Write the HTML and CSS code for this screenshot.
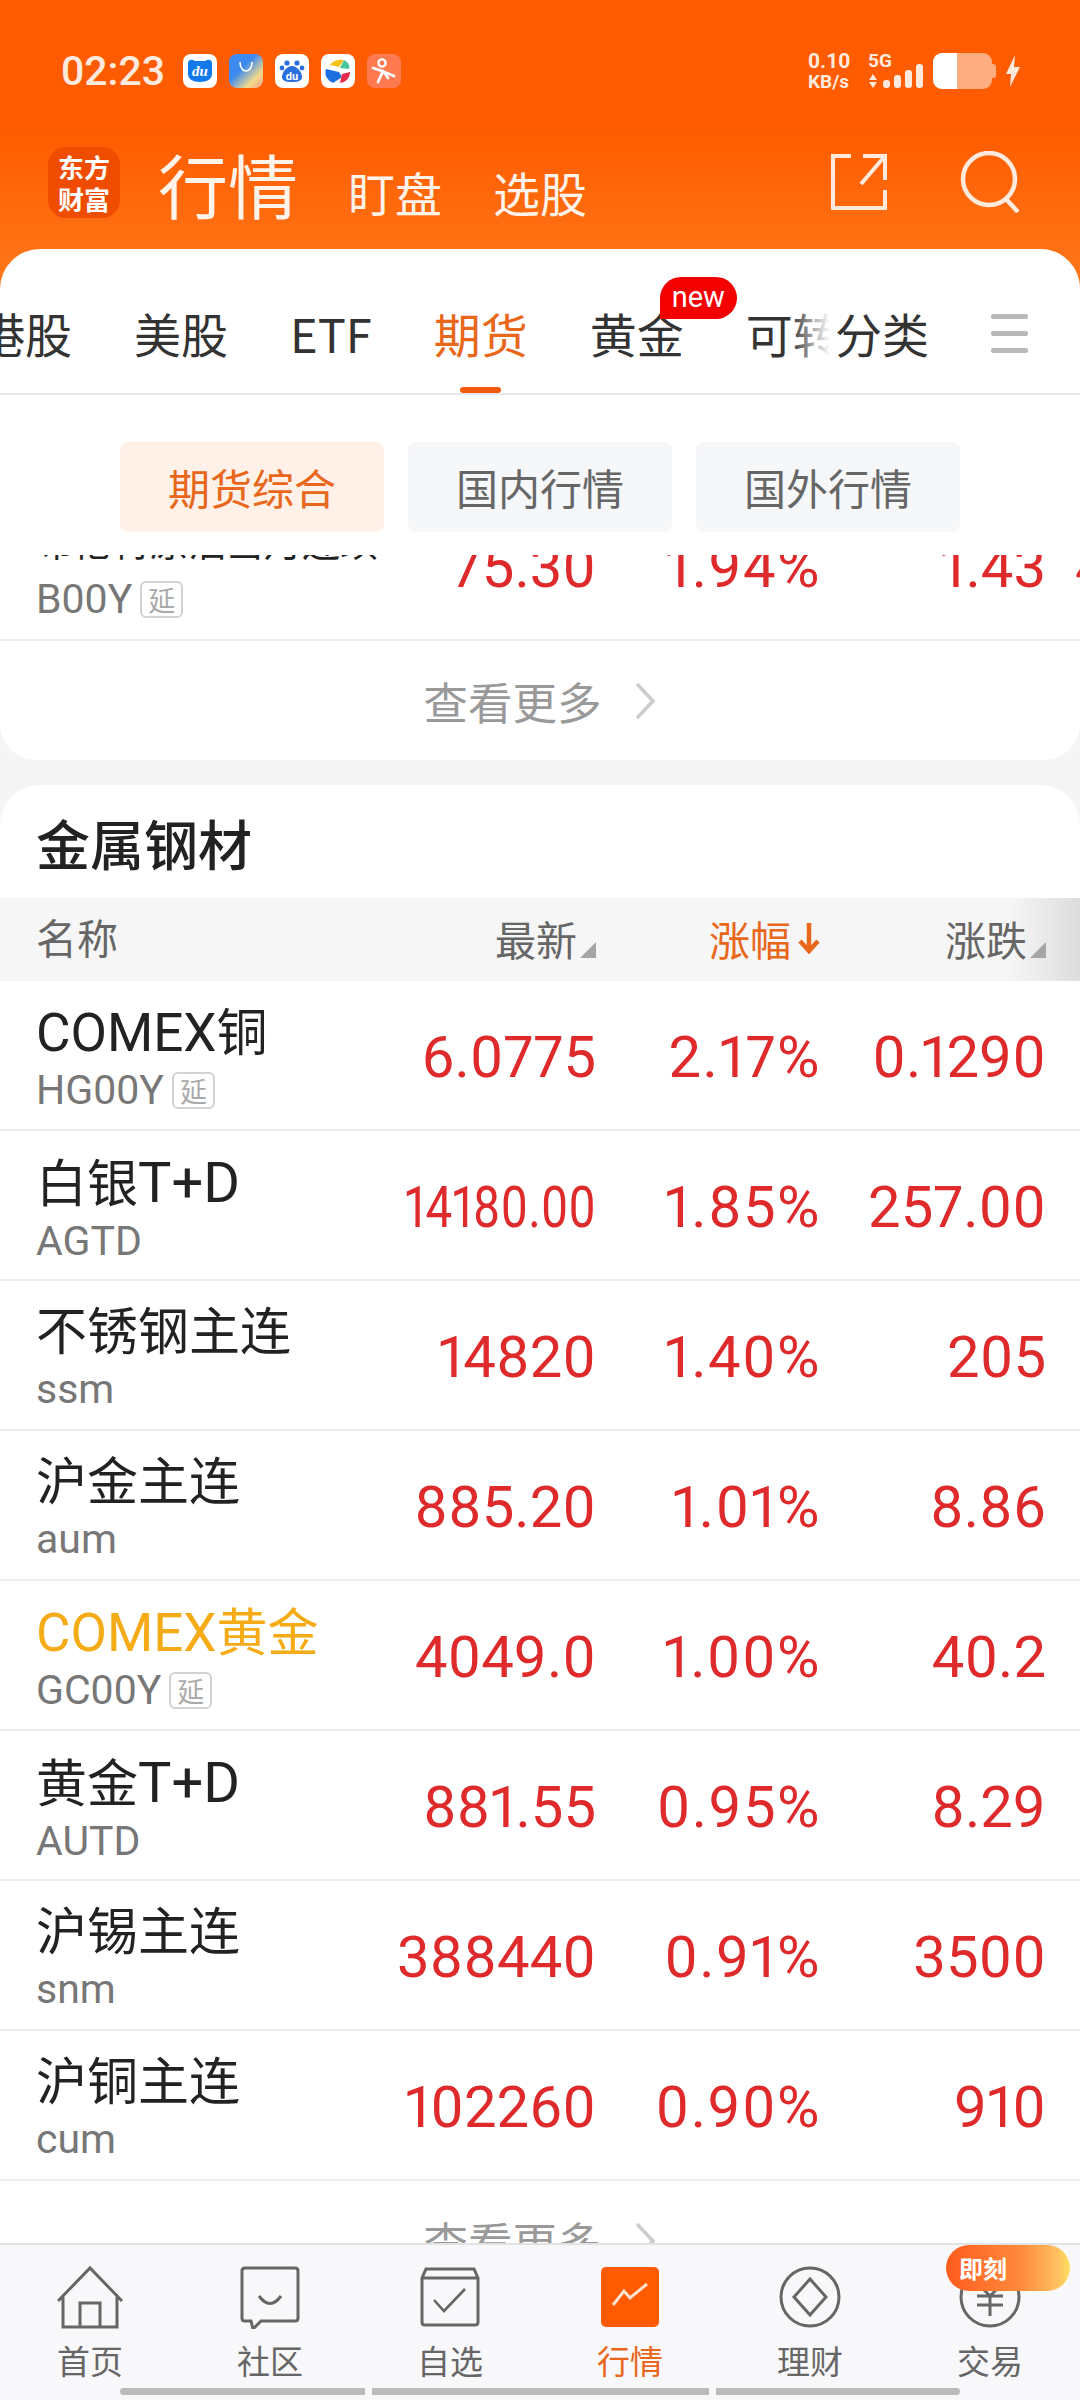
FILE: index.html
```html
<!DOCTYPE html>
<html lang="zh">
<head>
<meta charset="utf-8">
<title>行情</title>
<link rel="stylesheet" href="styles.css">
</head>
<body>
<div class="app">
  <header class="header">
    <div class="status">
      <span class="time">02:23</span>
      <div class="apps">
        <svg class="app-ic" viewBox="0 0 34 34"><rect width="34" height="34" rx="8" fill="#fff"/><path d="M5 9c0-3 3-4 5-3l2 1h10l2-1c2-1 5 0 5 3v11c0 5-5 8-12 8S5 25 5 20z" fill="#1479e8"/><text x="17" y="22" class="du-t" fill="#fff">du</text></svg>
        <svg class="app-ic" viewBox="0 0 34 34"><defs><linearGradient id="g1" x1="0" x2="1" y1="0" y2="1"><stop offset=".4" stop-color="#3d8bf0"/><stop offset=".75" stop-color="#f4d98a"/><stop offset="1" stop-color="#f0a090"/></linearGradient></defs><rect width="34" height="34" rx="8" fill="url(#g1)"/><path d="M11 8c0 12 12 12 12 0" fill="none" stroke="#fff" stroke-width="1.6"/></svg>
        <svg class="app-ic" viewBox="0 0 34 34"><rect width="34" height="34" rx="8" fill="#fff"/><circle cx="12" cy="9" r="2.6" fill="#2a6fe0"/><circle cx="22" cy="9" r="2.6" fill="#2a6fe0"/><circle cx="7" cy="14" r="2.4" fill="#2a6fe0"/><circle cx="27" cy="14" r="2.4" fill="#2a6fe0"/><path d="M17 12c5 0 10 6 10 11 0 4-4 5-10 5s-10-1-10-5c0-5 5-11 10-11z" fill="#2a6fe0"/><text x="17" y="26" class="du-s" fill="#fff">du</text></svg>
        <svg class="app-ic" viewBox="0 0 34 34"><rect width="34" height="34" rx="8" fill="#fff"/><path d="M9 11c3-5 9-6 14-5l-5 7z" fill="#f7c21c"/><path d="M23 6c4 2 6 5 5 9l-9-1z" fill="#46c79a"/><path d="M5 15l13 3 3 5-9 6c-6-3-9-8-7-14z" fill="#1b6fe0"/><path d="M21 20l8-2c0 6-4 10-10 11z" fill="#e6294b"/></svg>
        <svg class="app-ic" viewBox="0 0 34 34"><rect width="34" height="34" rx="8" fill="#ff7a50"/><circle cx="15" cy="9" r="3.6" fill="none" stroke="#fff" stroke-width="2.4"/><path d="M6 14l9 3 12 5M16 17l-5 11M17 18l4 6" fill="none" stroke="#fff" stroke-width="2.8" stroke-linecap="round"/></svg>
      </div>
      <div class="sys">
        <div class="speed"><span>0.10</span><span>KB/s</span></div>
        <div class="net">
          <span class="five">5G</span>
          <svg class="signal" viewBox="0 0 56 24"><path d="M1 16l4-6 4 6zM1 18l4 6 4-6z" fill="#ffeadd"/><rect x="15" y="16" width="7" height="8" rx="3" fill="#ffeadd"/><rect x="26" y="11" width="7" height="13" rx="3" fill="#ffeadd"/><rect x="37" y="6" width="7" height="18" rx="3" fill="#ffeadd"/><rect x="48" y="0" width="7" height="24" rx="3" fill="#ffeadd"/></svg>
        </div>
        <div class="battery"><span class="battery-fill"></span></div>
        <span class="battery-tip"></span>
        <svg class="bolt" viewBox="0 0 14 32"><path d="M9 0L0 19h5l-1 13 10-20H8z" fill="#ffeadd"/></svg>
      </div>
    </div>
    <div class="nav">
      <div class="logo"><span>东方</span><span>财富</span></div>
      <span class="nav-main">行情</span>
      <span class="nav-sub">盯盘</span>
      <span class="nav-sub">选股</span>
      <svg class="nav-share" viewBox="0 0 56 56"><path d="M20 2H2v52h52V36M54 26V2H32M54 2L30 30" fill="none" stroke="#ffeadd" stroke-width="4"/></svg>
      <svg class="nav-search" viewBox="0 0 60 62"><circle cx="29" cy="28" r="26" fill="none" stroke="#ffeadd" stroke-width="4.5"/><path d="M46 48l12 13" fill="none" stroke="#ffeadd" stroke-width="4.5"/></svg>
    </div>
  </header>

  <section class="panel">
    <nav class="tabs">
      <div class="tab-track">
        <span class="tab">港股</span>
        <span class="tab">美股</span>
        <span class="tab">ETF</span>
        <span class="tab tab-on">期货</span>
        <span class="tab tab-new">黄金<em class="new">new</em></span>
        <span class="tab">可转债</span>
      </div>
      <div class="tab-tail">
        <span class="tab">分类</span>
        <span class="menu"><i></i><i></i><i></i></span>
      </div>
    </nav>
    <div class="pills">
      <span class="pill pill-on">期货综合</span>
      <span class="pill">国内行情</span>
      <span class="pill">国外行情</span>
    </div>
  </section>

  <main class="scroll">
    <div class="clip">
      <div class="row row-clipped">
        <div class="name">
          <span class="n1 n-small">布伦特原油当月连续</span>
          <span class="n2">B00Y<b class="tag">延</b></span>
        </div>
        <span class="v">75.30</span><span class="v p">1.94%</span><span class="v">1.43</span><span class="v v-next">4.11</span>
      </div>
    </div>
    <a class="more">查看更多<svg class="chev" viewBox="0 0 20 38"><path d="M2 2l16 17L2 36" fill="none" stroke="#ccc" stroke-width="3.5"/></svg></a>
    <div class="gap"></div>
    <section class="card">
      <h2 class="title">金属钢材</h2>
      <div class="row thead">
        <span class="th-name">名称</span>
        <span class="th">最新<i class="tri"></i></span>
        <span class="th th-on">涨幅<svg class="arrow" viewBox="0 0 24 32"><path d="M12 1v28M3 19l9 10 9-10" fill="none" stroke="#e8671a" stroke-width="4.5"/></svg></span>
        <span class="th">涨跌<i class="tri"></i></span>
      </div>
      <div class="row"><div class="name"><span class="n1"><span class="lat">COMEX</span>铜</span><span class="n2">HG00Y<b class="tag">延</b></span></div><span class="v">6.0775</span><span class="v p">2.17%</span><span class="v">0.1290</span></div>
      <div class="row"><div class="name"><span class="n1">白银<span class="lat-wide">T+D</span></span><span class="n2">AGTD</span></div><span class="v v-squeeze">14180.00</span><span class="v p">1.85%</span><span class="v">257.00</span></div>
      <div class="row"><div class="name"><span class="n1">不锈钢主连</span><span class="n2">ssm</span></div><span class="v">14820</span><span class="v p">1.40%</span><span class="v">205</span></div>
      <div class="row"><div class="name"><span class="n1">沪金主连</span><span class="n2">aum</span></div><span class="v">885.20</span><span class="v p">1.01%</span><span class="v">8.86</span></div>
      <div class="row"><div class="name"><span class="n1 n-gold"><span class="lat">COMEX</span>黄金</span><span class="n2">GC00Y<b class="tag">延</b></span></div><span class="v">4049.0</span><span class="v p">1.00%</span><span class="v">40.2</span></div>
      <div class="row"><div class="name"><span class="n1">黄金<span class="lat-wide">T+D</span></span><span class="n2">AUTD</span></div><span class="v">881.55</span><span class="v p">0.95%</span><span class="v">8.29</span></div>
      <div class="row"><div class="name"><span class="n1">沪锡主连</span><span class="n2">snm</span></div><span class="v">388440</span><span class="v p">0.91%</span><span class="v">3500</span></div>
      <div class="row"><div class="name"><span class="n1">沪铜主连</span><span class="n2">cum</span></div><span class="v">102260</span><span class="v p">0.90%</span><span class="v">910</span></div>
      <a class="more">查看更多<svg class="chev" viewBox="0 0 20 38"><path d="M2 2l16 17L2 36" fill="none" stroke="#ccc" stroke-width="3.5"/></svg></a>
    </section>
  </main>

  <footer class="tabbar">
    <div class="items">
      <div class="item"><svg class="ic" viewBox="0 0 66 64"><path d="M1 36L33 3l32 33M6 32v30h54V32M23 62V38h20v24" fill="none" stroke="#666" stroke-width="3"/></svg><span>首页</span></div>
      <div class="item"><svg class="ic" viewBox="0 0 66 64"><path d="M8 6q0-3 3-3h50q3 0 3 3v47q0 3-3 3H27l-8 8-2-8h-6q-3 0-3-3z" transform="translate(-3 0)" fill="none" stroke="#666" stroke-width="3"/><path d="M22 31q11 15 22 0" fill="none" stroke="#666" stroke-width="3"/></svg><span>社区</span></div>
      <div class="item"><svg class="ic" viewBox="0 0 66 64"><path d="M9 4h48l4 9v44q0 3-3 3H8q-3 0-3-3V13zM5 13h56" fill="none" stroke="#666" stroke-width="3"/><path d="M17 35l10 11 21-22" fill="none" stroke="#666" stroke-width="2.6"/></svg><span>自选</span></div>
      <div class="item item-on"><svg class="ic" viewBox="0 0 66 64"><rect x="4" y="2" width="58" height="60" rx="5" fill="#ff5a00"/><path d="M16 40l11-14 6 7 17-14" fill="none" stroke="#ffe3d0" stroke-width="3"/></svg><span>行情</span></div>
      <div class="item"><svg class="ic" viewBox="0 0 66 64"><circle cx="33" cy="32" r="29" fill="none" stroke="#666" stroke-width="3"/><path d="M33 14l16 18-16 18-16-18z" fill="none" stroke="#666" stroke-width="3"/></svg><span>理财</span></div>
      <div class="item"><svg class="ic" viewBox="0 0 66 64"><circle cx="33" cy="32" r="29" fill="none" stroke="#666" stroke-width="3"/><path d="M23 21l10 10 10-10M20 31h26M20 40h26M33 31v20" fill="none" stroke="#666" stroke-width="3"/></svg><span>交易</span></div>
    </div>
    <div class="homebar"><i class="seg-a"></i><i class="seg-b"></i><i class="seg-c"></i></div>
    <div class="now">即刻</div>
  </footer>
</div>
</body>
</html>
```

FILE: styles.css
```css
* { box-sizing: border-box; }
html, body { margin: 0; padding: 0; }
body {
  width: 1080px;
  height: 2400px;
  overflow: hidden;
  font-family: Roboto, "Noto Sans CJK SC", sans-serif;
  background: #fff;
}
.app {
  position: relative;
  width: 1080px;
  height: 2400px;
  display: flex;
  flex-direction: column;
  overflow: hidden;
  background: linear-gradient(180deg, #ff5a00 0, #ff5c00 130px, #ff7a1c 300px) no-repeat;
  background-size: 100% 300px;
}

/* header */
.header { height: 249px; flex: none; color: #ffeadd; padding-top: 53px; }
.status { height: 36px; display: flex; align-items: center; padding: 0 60px 0 61px; }
.time { font-size: 41px; font-weight: 500; width: 122px; }
.apps { display: flex; gap: 12px; }
.app-ic { width: 34px; height: 34px; display: block; }
.du-t { font: italic 700 15px "Liberation Serif", serif; text-anchor: middle; }
.du-s { font: 700 11px Roboto, sans-serif; text-anchor: middle; }
.sys { margin-left: auto; display: flex; align-items: center; height: 36px; }
.speed { display: flex; flex-direction: column; font-size: 21px; font-weight: 700; line-height: 20px; width: 60px; }
.speed span:last-child { font-size: 19px; margin-top: 1px; }
.net { width: 65px; display: flex; flex-direction: column; height: 36px; }
.five { font-size: 19px; font-weight: 700; line-height: 18px; margin-top: -1px; }
.signal { width: 56px; height: 24px; margin-top: -6px; display: block; }
.battery { width: 59px; height: 36px; border-radius: 9px; background: rgba(255,255,255,.5); overflow: hidden; }
.battery-tip { width: 4px; height: 14px; border-radius: 0 3px 3px 0; background: rgba(255,255,255,.5); }
.battery-fill { display: block; width: 24px; height: 100%; background: #fff; }
.bolt { width: 14px; height: 32px; margin-left: 10px; }

.nav { margin-top: 57px; height: 72px; display: flex; align-items: flex-end; padding-left: 48px; }
.logo { width: 72px; height: 71px; border-radius: 18px; background: #f04c00; display: flex; flex-direction: column; align-items: center; justify-content: center; font-size: 26px; font-weight: 700; line-height: 32px; color: #fff; font-family: "Noto Sans CJK SC", sans-serif; }
.nav-main { font-size: 70px; line-height: 68px; margin-left: 38px; font-family: "Noto Sans CJK SC", sans-serif; color: #fff3ea; }
.nav-sub { font-size: 47px; line-height: 52px; margin-left: 50px; font-family: "Noto Sans CJK SC", sans-serif; color: #fff3ea; }
.nav-sub + .nav-sub { margin-left: 51px; }
.nav-share { width: 56px; height: 56px; margin-left: 244px; margin-bottom: 8px; }
.nav-search { width: 60px; height: 62px; margin-left: 73px; margin-bottom: 5px; }

/* tabs panel */
.panel { flex: none; height: 306px; background: #fff; border-radius: 40px 40px 0 0; overflow: hidden; }
.tabs { position: relative; height: 146px; border-bottom: 2px solid #e8e8e8; overflow: hidden; }
.tab-track { display: flex; gap: 62px; margin-left: -22px; height: 144px; align-items: flex-start; padding-top: 54px; white-space: nowrap; }
.tab { font-size: 47px; line-height: 60px; color: #333; position: relative; font-family: "Noto Sans CJK SC", sans-serif; flex: none; height: 90px; }
.tab-on { color: #e8671a; }
.tab-on::after { content: ""; position: absolute; left: 26px; width: 41px; bottom: 0; height: 6px; border-radius: 3px; background: #f05a0a; }
.new { position: absolute; left: 70px; top: -26px; width: 77px; height: 42px; border-radius: 21px 21px 21px 0; background: #f40000; color: #fff; font: 400 29px/40px Roboto, sans-serif; text-align: center; }
.tab-tail { position: absolute; top: 0; right: 0; width: 290px; height: 144px; background: linear-gradient(90deg, rgba(255,255,255,0), #fff 40px); display: flex; padding: 54px 0 0 45px; }
.menu { display: flex; flex-direction: column; gap: 12px; margin: 11px 0 0 62px; }
.menu i { display: block; width: 37px; height: 5px; background: #b8b8b8; border-radius: 2px; }

.pills { display: flex; gap: 24px; padding: 47px 0 0 120px; }
.pill { width: 264px; height: 90px; border-radius: 8px; background: #f6f7f9; color: #666; font: 400 42px/90px "Noto Sans CJK SC", sans-serif; text-align: center; }
.pill-on { background: #fff0e8; color: #e8671a; }

/* scrolling list */
.scroll { flex: 1; min-height: 0; overflow: hidden; background: #f5f5f6; }
.clip { height: 86px; background: #fff; overflow: hidden; display: flex; flex-direction: column; justify-content: flex-end; }
.row { flex: none; height: 150px; display: grid; grid-template-columns: minmax(0, 1fr) 260px 225px 225px; padding: 0 34px 0 36px; align-items: center; border-bottom: 2px solid #eee; background: #fff; }
.row-clipped { grid-template-columns: 300px 260px 225px 225px 100px; padding-right: 0; overflow: hidden; }
.name { display: flex; flex-direction: column; align-self: start; padding-top: 22px; }
.n1 { font-size: 51px; line-height: 60px; color: #222; white-space: nowrap; }
.lat { font-size: 53px; }
.lat-wide { font-size: 56px; }
.n-small { font-size: 38px; }
.n-gold { color: #f5ab16; }
.n2 { font-size: 41px; line-height: 46px; color: #777; display: flex; align-items: center; margin-top: 3px; }
.tag { width: 43px; height: 37px; margin-left: 8px; border: 2px solid #d2d2d2; border-radius: 6px; color: #aaa; font: 400 27px/33px "Noto Sans CJK SC", sans-serif; text-align: center; }
.v { font-size: 58px; line-height: 60px; padding-top: 4px; color: #df2a2c; text-align: right; white-space: nowrap; font-variant-numeric: proportional-nums; }
.p { letter-spacing: 1.4px; }
.v-squeeze { transform: scaleX(.82); transform-origin: right center; }
.v-next { text-align: left; margin-left: 29px; }

.more { height: 119px; background: #fff; border-radius: 0 0 36px 36px; display: flex; align-items: center; justify-content: center; font: 400 44.5px "Noto Sans CJK SC", sans-serif; color: #999; padding-right: 2px; }
.chev { width: 20px; height: 38px; margin-left: 33px; }
.gap { height: 25px; }

.card { background: #fff; border-radius: 40px 40px 0 0; overflow: hidden; }
.title { margin: 0; height: 113px; padding: 30px 0 0 36px; font: 500 54px/56px "Noto Sans CJK SC", sans-serif; color: #222; }
.thead { height: 83px; border: 0; padding-bottom: 3px; background: linear-gradient(90deg, #f6f6f6 calc(100% - 70px), #dcdcdc); font-size: 41px; color: #666; }
.th-name { font-family: "Noto Sans CJK SC", sans-serif; margin-top: -4px; }
.th { display: flex; justify-content: flex-end; align-items: center; white-space: nowrap; font-family: "Noto Sans CJK SC", sans-serif; }
.th-on { color: #e8671a; }
.tri { width: 16px; height: 16px; margin: 24px 0 0 3px; background: #a5a5a5; clip-path: polygon(100% 0, 100% 100%, 0 100%); }
.arrow { width: 24px; height: 32px; margin-left: 6px; }

/* bottom bar */
.tabbar { position: relative; flex: none; height: 157px; background: #f8f8fa; border-top: 2px solid #e2e2e2; padding-top: 20px; }
.items { display: grid; grid-template-columns: repeat(6, 180px); }
.item { display: flex; flex-direction: column; align-items: center; color: #666; font: 400 33px/40px "Noto Sans CJK SC", sans-serif; }
.item span { margin-top: 11px; }
.item-on { color: #e8671a; }
.ic { width: 66px; height: 64px; display: block; }
.homebar { display: flex; gap: 7px; margin: 8px 120px 0; }
.homebar i { display: block; height: 7px; background: #bbb; }
.seg-a { flex: 245; border-radius: 4px 0 0 4px; }
.seg-b { flex: 337; }
.seg-c { flex: 244; border-radius: 0 4px 4px 0; }
.now { position: absolute; left: 946px; top: 0; width: 124px; height: 46px; border-radius: 23px; padding-left: 13px; background: linear-gradient(90deg, #ff5c1e, #ff8a3c 60%, #ffc060 90%, #ffe060); color: #fff; font: 700 24px/46px "Noto Sans CJK SC", sans-serif; }
```
